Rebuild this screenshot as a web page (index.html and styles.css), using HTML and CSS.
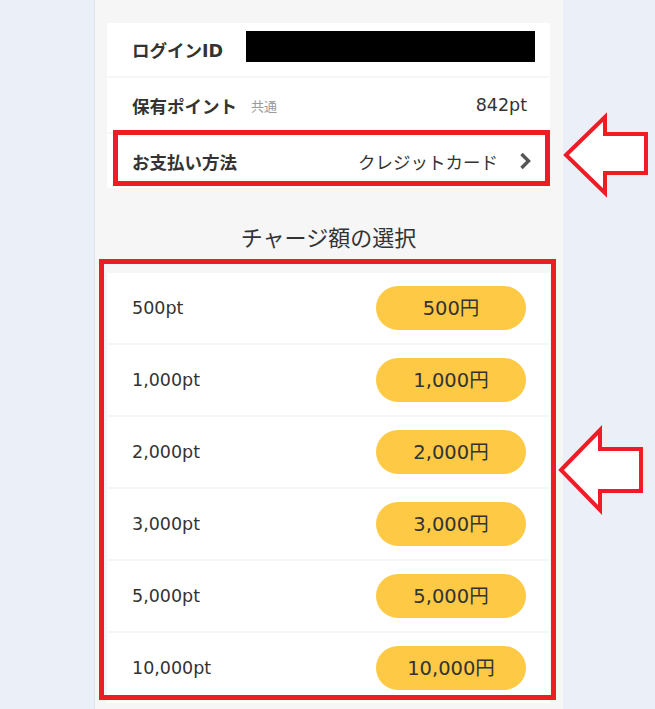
FILE: index.html
```html
<!DOCTYPE html>
<html lang="ja">
<head>
<meta charset="utf-8">
<title>チャージ額の選択</title>
<link rel="stylesheet" href="styles.css">
</head>
<body>
<div class="column">
  <div class="info">
    <div class="info-row">
      <span class="label">ログインID</span>
      <span class="redact"></span>
    </div>
    <div class="info-row">
      <span class="label">保有ポイント</span>
      <span class="sub">共通</span>
      <span class="value">842pt</span>
    </div>
    <div class="info-row payment">
      <span class="label">お支払い方法</span>
      <span class="value">クレジットカード</span>
      <svg class="chev" width="12" height="18" viewBox="0 0 12 18"><polyline points="2.5,2 9.5,9 2.5,16" fill="none" stroke="#555" stroke-width="3.4"/></svg>
      <span class="mark mark-pay"></span>
    </div>
  </div>

  <h2 class="title">チャージ額の選択</h2>

  <div class="charge-list">
    <div class="charge-row"><span class="pt">500pt</span><span class="btn">500円</span></div>
    <div class="charge-row"><span class="pt">1,000pt</span><span class="btn">1,000円</span></div>
    <div class="charge-row"><span class="pt">2,000pt</span><span class="btn">2,000円</span></div>
    <div class="charge-row"><span class="pt">3,000pt</span><span class="btn">3,000円</span></div>
    <div class="charge-row"><span class="pt">5,000pt</span><span class="btn">5,000円</span></div>
    <div class="charge-row"><span class="pt">10,000pt</span><span class="btn">10,000円</span></div>
    <span class="mark mark-list"></span>
  </div>
</div>

<svg class="arrows" width="655" height="709" viewBox="0 0 655 709">
  <polygon points="566,155 605,117 605,134 646,134 646,173 605,173 605,193" fill="#fff" stroke="#ee1c25" stroke-width="4" stroke-linejoin="miter"/>
  <polygon points="561,470 600,430 600,449 641,449 641,491 600,491 600,510" fill="#fff" stroke="#ee1c25" stroke-width="4" stroke-linejoin="miter"/>
</svg>
</body>
</html>
```

FILE: styles.css
```css
html, body {
  margin: 0;
  padding: 0;
}
body {
  background: #eaeff8;
  font-family: "DejaVu Sans", "Noto Sans CJK JP", sans-serif;
  color: #333;
  height: 709px;
  overflow: hidden;
  position: relative;
}
.column {
  margin-left: 94px;
  width: 469px;
  border-left: 1px solid #dfe3ea;
  background: #f6f6f6;
  padding: 23px 13px 0 12px;
  box-sizing: border-box;
  min-height: 709px;
}
.info {
  display: flex;
  flex-direction: column;
  gap: 2px;
}
.info-row {
  position: relative;
  height: 54px;
  background: #fff;
  display: flex;
  align-items: center;
  padding: 0 23px 0 25px;
  font-size: 17.5px;
  white-space: nowrap;
}
.info-row:first-child {
  height: 53px;
}
.label {
  font-weight: bold;
  flex-shrink: 0;
}
.redact {
  flex-shrink: 0;
  margin-left: 23px;
  width: 289px;
  height: 31px;
  background: #000;
  margin-top: -6px;
}
.sub {
  margin-left: 14px;
  font-size: 13px;
  color: #999;
}
.value {
  margin-left: auto;
}
.chev {
  flex-shrink: 0;
  margin-left: 21px;
  margin-right: -4px;
}
.mark {
  position: absolute;
  border: 5px solid #ee1c25;
  box-sizing: border-box;
  pointer-events: none;
}
.mark-pay {
  left: 6px;
  top: -4px;
  width: 437px;
  height: 56px;
}
.title {
  margin: 33px 0 22px;
  font-size: 22px;
  line-height: 30px;
  font-weight: normal;
  text-align: center;
  font-family: "Noto Sans CJK JP", sans-serif;
}
.charge-list {
  position: relative;
  display: flex;
  flex-direction: column;
  gap: 2px;
}
.charge-row {
  height: 70px;
  background: #fff;
  display: flex;
  align-items: center;
  justify-content: space-between;
  padding: 0 24px 0 25px;
}
.pt {
  font-size: 17.5px;
}
.btn {
  width: 150px;
  height: 44px;
  border-radius: 22px;
  background: #fec945;
  display: flex;
  align-items: center;
  justify-content: center;
  font-size: 19.5px;
  padding-bottom: 3px;
  box-sizing: border-box;
}
.mark-list {
  left: -8px;
  top: -14px;
  width: 457px;
  height: 441px;
}
.arrows {
  position: absolute;
  left: 0;
  top: 0;
  pointer-events: none;
}
```
